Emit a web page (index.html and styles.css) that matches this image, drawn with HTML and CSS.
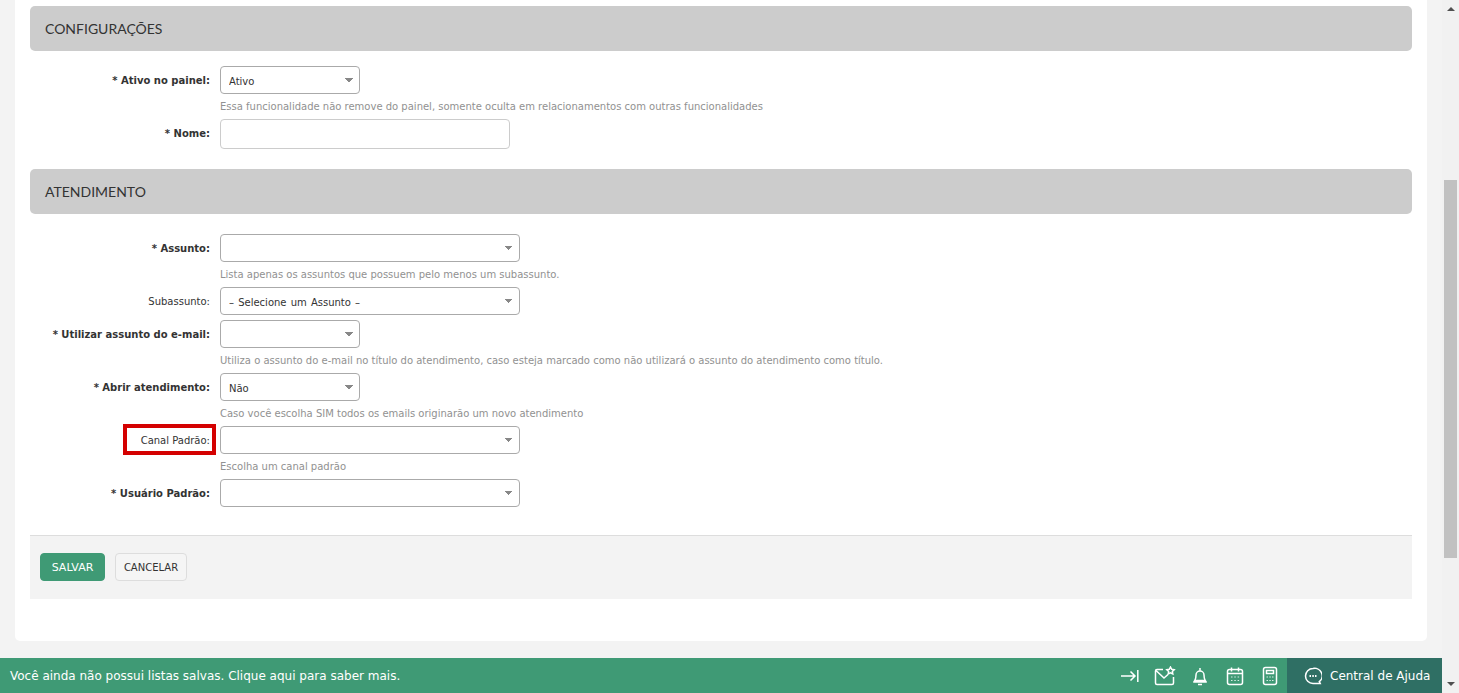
FILE: index.html
```html
<!DOCTYPE html>
<html lang="pt-br">
<head>
    <meta charset="UTF-8">
    <meta name="viewport" content="width=device-width, initial-scale=1.0">
    <title>Configurações</title>
    <link rel="stylesheet" href="styles.css">
</head>
<body>
    <div class="main">
        <div class="content">
            <div class="panel">
                <div class="section-title">CONFIGURAÇÕES</div>
                <div class="form-group first">
                    <div class="row">
                        <label class="label required">* Ativo no painel:</label>
                        <div class="field">
                            <select class="select small"><option>Ativo</option></select>
                            <div class="hint">Essa funcionalidade não remove do painel, somente oculta em relacionamentos com outras funcionalidades</div>
                        </div>
                    </div>
                    <div class="row">
                        <label class="label required label-input">* Nome:</label>
                        <div class="field"><input class="input" type="text"></div>
                    </div>
                </div>

                <div class="section-title next">ATENDIMENTO</div>
                <div class="form-group">
                    <div class="row">
                        <label class="label required">* Assunto:</label>
                        <div class="field">
                            <select class="select"><option></option></select>
                            <div class="hint">Lista apenas os assuntos que possuem pelo menos um subassunto.</div>
                        </div>
                    </div>
                    <div class="row">
                        <label class="label">Subassunto:</label>
                        <div class="field"><select class="select placeholder"><option>– Selecione um Assunto –</option></select></div>
                    </div>
                    <div class="row">
                        <label class="label required">* Utilizar assunto do e-mail:</label>
                        <div class="field">
                            <select class="select small"><option></option></select>
                            <div class="hint">Utiliza o assunto do e-mail no título do atendimento, caso esteja marcado como não utilizará o assunto do atendimento como título.</div>
                        </div>
                    </div>
                    <div class="row">
                        <label class="label required">* Abrir atendimento:</label>
                        <div class="field">
                            <select class="select small"><option>Não</option></select>
                            <div class="hint">Caso você escolha SIM todos os emails originarão um novo atendimento</div>
                        </div>
                    </div>
                    <div class="row highlighted">
                        <label class="label">Canal Padrão:</label>
                        <div class="field">
                            <select class="select"><option></option></select>
                            <div class="hint">Escolha um canal padrão</div>
                        </div>
                    </div>
                    <div class="row">
                        <label class="label required">* Usuário Padrão:</label>
                        <div class="field"><select class="select"><option></option></select></div>
                    </div>
                </div>

                <div class="actions">
                    <button class="btn btn-save">SALVAR</button>
                    <button class="btn btn-cancel">CANCELAR</button>
                </div>
            </div>
        </div>

        <div class="bottom-bar">
            <span class="bar-text">Você ainda não possui listas salvas. Clique aqui para saber mais.</span>
            <div class="bar-icons">
                <svg class="icon icon-arrow" width="18" height="20" viewBox="0 0 18 20"><path d="M0 10h14M9.500 5.500 14 10l-4.500 4.500M16.800 4v12"/></svg>
                <svg class="icon icon-mail" width="22" height="20" viewBox="0 0 22 20"><path d="M9 3.500H3A1.500 1.500 0 0 0 1.500 5v12A1.500 1.500 0 0 0 3 18.500h15a1.500 1.500 0 0 0 1.500-1.500v-6M2 4.500l8 7.500 4-3.500"/><path d="m16.500 1 1.200 2.300 2.500.4-1.800 1.800.4 2.500-2.300-1.200-2.300 1.200.4-2.500-1.800-1.800 2.500-.4z"/></svg>
                <svg class="icon" width="16" height="20" viewBox="0 0 16 20"><path d="M2.800 14.500c1-1.500 1.200-3 1.200-5.500a4 4 0 0 1 8 0c0 2.500.2 4 1.200 5.500zM1.200 16h13.600M6 18.500h4M8 2v3"/></svg>
                <svg class="icon" width="18" height="20" viewBox="0 0 18 20"><rect x="1.500" y="3.500" width="15" height="15" rx="2"/><path d="M1.500 7.500h15M5.500 1.500v4M12.500 1.500v4"/><path class="dots" d="M5 11h1.500M8.300 11h1.500M11.600 11h1.500M5 14.500h1.500M8.300 14.500h1.500M11.600 14.500h1.500"/></svg>
                <svg class="icon" width="16" height="20" viewBox="0 0 16 20"><rect x="1.500" y="1.500" width="13" height="17" rx="2"/><rect x="4.500" y="4.500" width="7" height="3"/><path class="dots" d="M4.500 11h1.500M7.300 11h1.500M10 11h1.500M4.500 14.500h1.500M7.300 14.500h1.500M10 14.500h1.500"/></svg>
            </div>
            <div class="help">
                <svg class="icon" width="18" height="18" viewBox="0 0 18 18"><path d="M9 1.500a7.500 7.500 0 1 0 0 15h7.200l-.9-1.800A7.500 7.500 0 0 0 9 1.500z"/><path class="dots chat-dots" d="M5.500 9h1.500M8.300 9h1.500M11 9h1.500"/></svg>
                <span>Central de Ajuda</span>
            </div>
        </div>
    </div>

    <div class="scrollbar">
        <div class="arrow-up"></div>
        <div class="thumb"></div>
        <div class="arrow-down"></div>
    </div>
</body>
</html>
```

FILE: styles.css
```css
* {
    box-sizing: border-box;
}

body {
    margin: 0;
    height: 693px;
    display: flex;
    overflow: hidden;
    background-color: #f3f3f3;
    font-family: 'DejaVu Sans', sans-serif;
    font-size: 10px;
    color: #333;
}

.main {
    flex: 1;
    display: flex;
    flex-direction: column;
}

.content {
    flex: 1;
    padding: 0 15px;
}

.panel {
    height: 641px;
    padding: 6px 15px 0;
    background-color: #fff;
    border-radius: 0 0 5px 5px;
}

.section-title {
    height: 45px;
    padding-left: 15px;
    display: flex;
    align-items: center;
    background-color: #ccc;
    border-radius: 5px;
    font-family: 'Lato', sans-serif;
    font-size: 14px;
    color: #333;
}

.section-title.next {
    margin-top: 20px;
}

.form-group {
    margin-top: 20px;
}

.form-group.first {
    margin-top: 15px;
}

.row {
    display: flex;
    margin-bottom: 5px;
    position: relative;
}

.form-group .row:last-child {
    margin-bottom: 0;
}

.label {
    width: 180px;
    margin-right: 10px;
    height: 28px;
    line-height: 30px;
    text-align: right;
    color: #333;
}

.label.required {
    font-weight: 700;
}

.label-input {
    height: 30px;
}

.select {
    display: block;
    width: 300px;
    height: 28px;
    padding: 2px 20px 0 8px;
    appearance: none;
    background-color: #fff;
    background-image:
        linear-gradient(45deg, transparent 50%, #888 50%),
        linear-gradient(-45deg, transparent 50%, #888 50%);
    background-size: 4px 4px, 4px 4px;
    background-position: right 10px top 11px, right 6px top 11px;
    background-repeat: no-repeat;
    border: 1px solid #aaa;
    border-radius: 4px;
    font-family: inherit;
    font-size: 10px;
    color: #333;
}

.select.small {
    width: 140px;
}

.select.placeholder {
    word-spacing: 1px;
}

.input {
    display: block;
    width: 290px;
    height: 30px;
    background-color: #fff;
    border: 1px solid #ccc;
    border-radius: 4px;
}

.hint {
    height: 20px;
    line-height: 26px;
    color: #919191;
    white-space: nowrap;
}

.highlighted::before {
    content: "";
    position: absolute;
    left: 93px;
    top: -2px;
    width: 85px;
    height: 23px;
    border: 4px solid #d40000;
    pointer-events: none;
}

.actions {
    height: 64px;
    margin-top: 28px;
    padding: 17px 10px 0;
    display: flex;
    gap: 10px;
    align-items: flex-start;
    background-color: #f3f3f3;
    border-top: 1px solid #ddd;
}

.btn {
    height: 28px;
    border-radius: 4px;
    font-family: inherit;
    font-size: 10px;
}

.btn-save {
    width: 65px;
    background-color: #3f9a75;
    border: 1px solid #3f9a75;
    color: #fff;
    font-size: 11px;
}

.btn-cancel {
    width: 72px;
    background-color: #f5f5f5;
    border: 1px solid #ddd;
    color: #333;
}

.bottom-bar {
    height: 35px;
    display: flex;
    align-items: center;
    background-color: #3f9a75;
    color: #fff;
}

.bar-text {
    flex: 1;
    padding-left: 10px;
    font-size: 12px;
}

.bar-icons {
    display: flex;
    align-items: center;
    gap: 18px;
    margin-right: 9px;
}

.icon {
    display: block;
    fill: none;
    stroke: #fff;
    stroke-width: 1.500;
}

.icon-arrow {
    margin-right: -3px;
}

.icon-mail {
    margin-right: -2px;
}

.icon .dots {
    stroke-width: 1.200;
    opacity: 0.8;
}

.icon .chat-dots {
    stroke-width: 1.800;
    opacity: 1;
}

.help {
    width: 155px;
    height: 35px;
    padding-left: 17px;
    display: flex;
    align-items: center;
    gap: 8px;
    background-color: #2f6f64;
    font-size: 12px;
}

.scrollbar {
    width: 17px;
    height: 693px;
    display: flex;
    flex-direction: column;
    background-color: #f1f1f1;
}

.arrow-up {
    width: 0;
    height: 0;
    margin: 7px 0 0 5px;
    border-left: 4px solid transparent;
    border-right: 4px solid transparent;
    border-bottom: 4px solid #505050;
}

.thumb {
    width: 13px;
    height: 378px;
    margin: 169px 0 0 2px;
    background-color: #c1c1c1;
}

.arrow-down {
    width: 0;
    height: 0;
    margin: auto 0 7px 5px;
    border-left: 4px solid transparent;
    border-right: 4px solid transparent;
    border-top: 4px solid #505050;
}
```
